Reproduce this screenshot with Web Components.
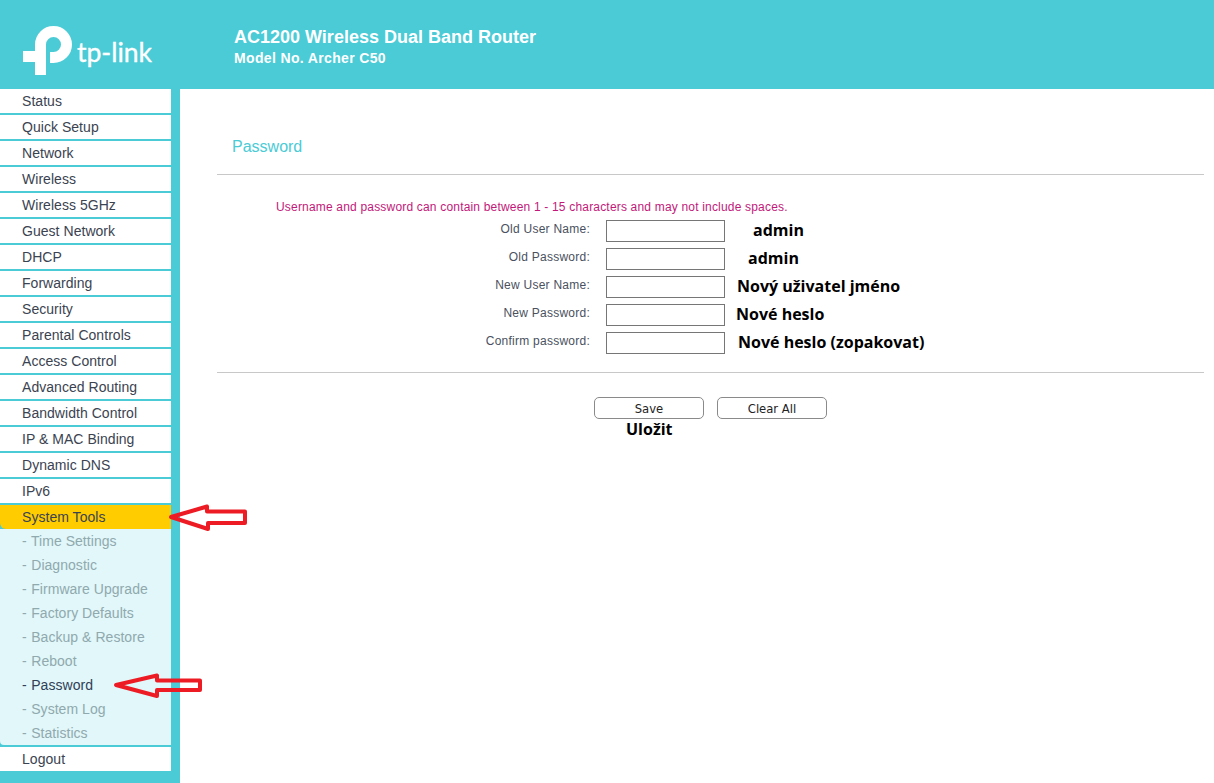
<!DOCTYPE html>
<html>
<head>
<meta charset="utf-8">
<title>Password</title>
<style>
html, body { margin: 0; padding: 0; background: #fff; overflow: hidden; }
body { font-family: "Liberation Sans", Arial, sans-serif; }
</style>
</head>
<body>
<tp-app></tp-app>
<script>
class TpHeader extends HTMLElement {
	constructor() {
		super();
		this.attachShadow({mode: 'open'}).innerHTML = `
			<style>
				:host { display: flex; height: 89px; background: #4acbd6; color: #fff; }
				.logo { width: 234px; flex: none; display: flex; padding: 26px 0 0 23px; box-sizing: border-box; }
				svg { width: 49px; height: 49px; flex: none; }
				.word { font: 400 26.5px/30px Lato, sans-serif; margin: 11px 0 0 5px; -webkit-text-stroke: .35px #fff; }
				.model { padding-top: 27px; font-weight: bold; }
				h1 { margin: 0; font-size: 18px; line-height: 20px; }
				p { margin: 2px 0 0; font-size: 14px; line-height: 18px; letter-spacing: .35px; }
			</style>
			<div class="logo">
				<svg viewBox="23 26 49 49" fill="none">
					<path d="M40.5 75V44.5a13 13 0 1 1 13 13H50" stroke="#fff" stroke-width="11"/>
					<rect x="23" y="51" width="23" height="11" fill="#fff"/>
				</svg>
				<span class="word">tp-link</span>
			</div>
			<div class="model">
				<h1>AC1200 Wireless Dual Band Router</h1>
				<p>Model No. Archer C50</p>
			</div>`;
	}
}
customElements.define('tp-header', TpHeader);

class TpMenuItem extends HTMLElement {
	constructor() {
		super();
		this.attachShadow({mode: 'open'}).innerHTML = `
			<style>
				:host { display: block; height: 24px; margin-bottom: 2px; padding-left: 22px; background: #fff;
					font-size: 14px; line-height: 24px; color: #3b4351; letter-spacing: .04px; }
				:host([open]) { background: #ffcc00; border-bottom-left-radius: 6px; margin-bottom: 0; }
				:host([sub]) { margin: 0; background: none; color: #90a9ae; }
				:host([current]) { color: #2f4057; }
				.dash { margin-right: .6px; }
			</style>
			${this.hasAttribute('sub') ? '<span class="dash">-</span> ' : ''}<slot></slot>`;
	}
}
customElements.define('tp-menu-item', TpMenuItem);

class TpSidebar extends HTMLElement {
	constructor() {
		super();
		let main = ['Status', 'Quick Setup', 'Network', 'Wireless', 'Wireless 5GHz', 'Guest Network', 'DHCP', 'Forwarding',
			'Security', 'Parental Controls', 'Access Control', 'Advanced Routing', 'Bandwidth Control', 'IP & MAC Binding',
			'Dynamic DNS', 'IPv6'];
		let sub = ['Time Settings', 'Diagnostic', 'Firmware Upgrade', 'Factory Defaults', 'Backup & Restore', 'Reboot',
			'Password', 'System Log', 'Statistics'];
		let esc = s => s.replace(/&/g, '&amp;');
		this.attachShadow({mode: 'open'}).innerHTML = `
			<style>
				:host { display: block; width: 171px; padding-right: 9px; background: #4acbd6; }
				.sub { background: #e1f7f9; height: 216px; border-bottom-left-radius: 4px; margin-bottom: 2px; }
			</style>
			${main.map(m => `<tp-menu-item>${esc(m)}</tp-menu-item>`).join('')}
			<tp-menu-item open>System Tools</tp-menu-item>
			<div class="sub">
				${sub.map(s => `<tp-menu-item sub ${s === 'Password' ? 'current' : ''}>${esc(s)}</tp-menu-item>`).join('')}
			</div>
			<tp-menu-item>Logout</tp-menu-item>`;
	}
}
customElements.define('tp-sidebar', TpSidebar);

class TpFormRow extends HTMLElement {
	constructor() {
		super();
		this.attachShadow({mode: 'open'}).innerHTML = `
			<style>
				:host { display: flex; height: 28px; align-items: flex-start; }
				label { width: 373px; flex: none; text-align: right; font-size: 12px; line-height: 18px; color: #4a5160; letter-spacing: .25px; }
				input { width: 119px; height: 22px; margin: 0 0 0 16px; padding: 0; box-sizing: border-box;
					border: 1px solid #767676; background: #fff; flex: none; }
				.note { font: bold 16px/20px "Open Sans", sans-serif; color: #000; white-space: nowrap; }
			</style>
			<label>${this.getAttribute('label')}</label>
			<input type="text">
			<span class="note" style="margin-left:${this.getAttribute('gap')}px"><slot></slot></span>`;
	}
}
customElements.define('tp-form-row', TpFormRow);

class TpPasswordPage extends HTMLElement {
	constructor() {
		super();
		this.attachShadow({mode: 'open'}).innerHTML = `
			<style>
				:host { display: block; padding: 0 10px 0 37px; }
				h2 { margin: 0; padding: 48px 0 18px 15px; font-size: 16px; line-height: 19px; font-weight: normal; color: #4acbd6; }
				hr { margin: 0; border: 0; height: 1px; background: #c8c8c8; }
				.hint { margin: 0; padding: 25px 0 0 59px; font-size: 12px; line-height: 14px; color: #c2187a; height: 20px; letter-spacing: .185px; }
				.rows { height: 152px; }
				.buttons { display: flex; gap: 13px; padding: 24px 0 0 377px; }
				button { width: 110px; height: 22px; padding: 1px 0 0; box-sizing: border-box; background: #fff; color: #222;
					border: 1px solid #8a8a8a; border-radius: 5px; font: 11.6px "DejaVu Sans", sans-serif; }
				.save-note { font: bold 16px/20px "Open Sans", sans-serif; color: #000; padding: 0 0 0 409px; }
			</style>
			<h2>Password</h2>
			<hr>
			<p class="hint">Username and password can contain between 1 - 15 characters and may not include spaces.</p>
			<div class="rows">
				<tp-form-row label="Old User Name:" gap="28">admin</tp-form-row>
				<tp-form-row label="Old Password:" gap="23">admin</tp-form-row>
				<tp-form-row label="New User Name:" gap="12">Nový uživatel jméno</tp-form-row>
				<tp-form-row label="New Password:" gap="11">Nové heslo</tp-form-row>
				<tp-form-row label="Confirm password:" gap="13">Nové heslo (zopakovat)</tp-form-row>
			</div>
			<hr>
			<div class="buttons"><button>Save</button><button>Clear All</button></div>
			<div class="save-note">Uložit</div>`;
	}
}
customElements.define('tp-password-page', TpPasswordPage);

class TpApp extends HTMLElement {
	constructor() {
		super();
		this.attachShadow({mode: 'open'}).innerHTML = `
			<style>
				:host { display: block; position: relative; width: 1214px; height: 783px; overflow: hidden; }
				.body { display: flex; height: 694px; }
				tp-sidebar { flex: none; }
				tp-password-page { flex: 1; }
				svg.arrows { position: absolute; left: 0; top: 0; pointer-events: none; }
				polygon { fill: none; stroke: #ed1c24; stroke-width: 4; stroke-linejoin: round; }
			</style>
			<tp-header></tp-header>
			<div class="body">
				<tp-sidebar></tp-sidebar>
				<tp-password-page></tp-password-page>
			</div>
			<svg class="arrows" width="1214" height="783">
				<polygon points="171,517 207,506.5 207,511.5 245,511.5 245,523 208,523 208,529"/>
				<polygon points="116,685 157,675.5 157,680.5 200,680.5 200,690 157,690 157,696"/>
			</svg>`;
	}
}
customElements.define('tp-app', TpApp);
</script>
</body>
</html>
